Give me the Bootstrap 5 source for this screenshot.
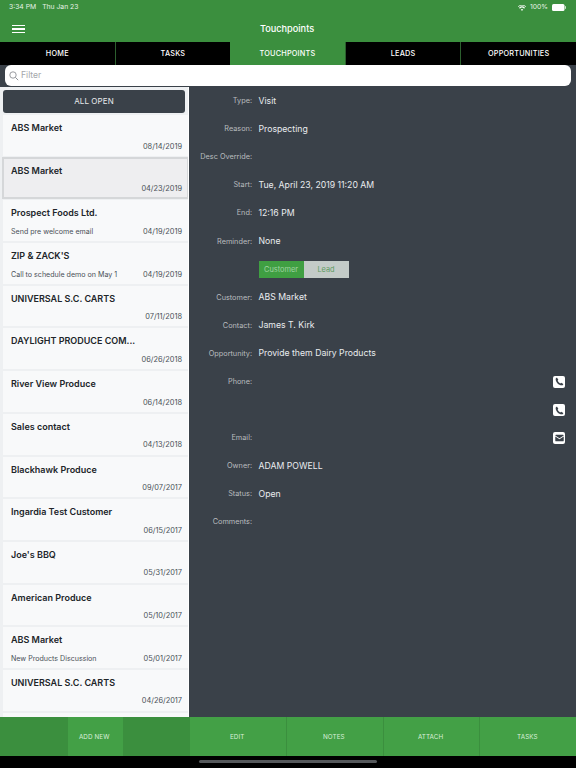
<!DOCTYPE html>
<html lang="en">
<head>
  <meta charset="UTF-8">
  <title>Touchpoints</title>
  <link href="https://cdn.jsdelivr.net/npm/bootstrap@5.3.3/dist/css/bootstrap.min.css" rel="stylesheet">
  <style>
    html, body { height: 768px; overflow: hidden; }
    body { background: #000; font-family: Inter, "Liberation Sans", sans-serif; color: #fff; }
    .app { width: 576px; height: 768px; }
    .top-head { height: 42px; background: #3b8f3e; padding: 0 10px 0 9px; }
    .status-row { height: 14px; font-size: 6.8px; color: #e6f2e6; padding-top: 1px; }
    .title-row { height: 28px; }
    .title-row span { font-size: 9.2px; font-weight: 500; flex: 1; text-align: center; padding-right: 17px; padding-top: 2px; }
    .burger { width: 13px; margin-left: 3px; padding-top: 2px; }
    .burger i { display: block; height: 1.4px; background: #fff; margin: 2.4px 0; }
    .tab-row { height: 23px; background: #000; }
    .tab-cell { flex: 1; font-size: 7.3px; font-weight: 500; letter-spacing: .2px; border-left: 1px solid #2c5f2e; padding-top: 1.5px; }
    .tab-cell:first-child { border-left: 0; }
    .tab-cell.on { background: #3b8f3e; border-left: 0; }
    .filter-wrap { height: 22px; background: #3a4149; padding: 0 5px 1px; }
    .filter-box { height: 21px; background: #fff; border-radius: 6px; color: #a4a7ab; font-size: 8.6px; padding-left: 4px; gap: 2px; }
    .main-row { height: 630px; }
    .left-col { width: 189px; background: #eef0f2; overflow: hidden; border-right: 1px solid #fff; }
    .all-open { height: 23px; margin: 2.500px 3px 2.500px; background: #3a4149; border-radius: 3px; font-size: 8px; color: #e8eaec; letter-spacing: .1px; }
    .tp-item { height: 40.7px; margin: 0 0 2px 3px; background: #f8f9fa; color: #212529; padding: 6px 6px 0 8px; }
    .tp-item.sel { background: #eeeef0; outline: 2px solid #d5d7d9; outline-offset: -1px; }
    .tp-name { font-size: 9px; font-weight: 600; line-height: 13px; height: 19.500px; white-space: nowrap; }
    .tp-sub { font-size: 7.1px; color: #495057; line-height: 12px; }
    .tp-date { font-size: 7.4px; }
    .right-col { flex: 1; background: #3a4149; }
    .det-row { height: 28.1px; }
    .det-label { width: 63px; text-align: right; font-size: 7.3px; color: #b9bcbf; padding-top: 1px; white-space: nowrap; }
    .det-val { margin-left: 6.5px; font-size: 8.7px; color: #e9ecef; }
    .seg-box { margin-left: 6.5px; height: 17px; font-size: 7.4px; width: 90px; }
    .seg-box div { flex: 1; }
    .seg-a { background: #3f9f42; color: #9fd3a1; }
    .seg-b { background: #c3cbc8; color: #5f9b63; }
    .act-icon { width: 12px; height: 12px; background: #fff; border-radius: 2px; margin-left: auto; margin-right: 11px; }
    .bottom-bar { height: 39px; background: #3b8f3e; }
    .bot-cell { font-size: 6.3px; color: #d9efd9; letter-spacing: .1px; background: #43a046; border-left: 1px solid #3b8f3e; padding-top: 3px; padding-right: 1.5px; }
    .home-wrap { height: 12px; }
    .home-line { width: 178px; height: 3px; background: #55585b; border-radius: 2px; margin-top: -1px; }
  </style>
</head>
<body>
<div class="app d-flex flex-column">

  <div class="top-head">
    <div class="status-row d-flex justify-content-between align-items-center">
      <div class="d-flex" style="gap:6px"><span>3:34 PM</span><span>Thu Jan 23</span></div>
      <div class="d-flex align-items-center gap-1">
        <svg width="8" height="6" viewBox="0 0 16 12"><path fill="#fff" d="M8 12 5.6 9.2a3.4 3.4 0 0 1 4.8 0zM3.8 7.3l-1.7-2a8.6 8.6 0 0 1 11.8 0l-1.7 2a6 6 0 0 0-8.4 0zM.9 3.9 0 2.8a11.7 11.7 0 0 1 16 0l-.9 1.1a10.300 10.300 0 0 0-14.200 0z"/></svg>
        <span>100%</span>
        <svg width="14" height="7" viewBox="0 0 14 7"><rect width="12.500" height="7" rx="1.500" fill="#fff"/><rect x="13" y="2.200" width="1" height="2.600" fill="#cfe5cf"/></svg>
      </div>
    </div>
    <div class="title-row d-flex align-items-center">
      <div class="burger"><i></i><i></i><i></i></div>
      <span>Touchpoints</span>
    </div>
  </div>

  <div class="tab-row d-flex">
    <div class="tab-cell d-flex align-items-center justify-content-center">HOME</div>
    <div class="tab-cell d-flex align-items-center justify-content-center">TASKS</div>
    <div class="tab-cell on d-flex align-items-center justify-content-center">TOUCHPOINTS</div>
    <div class="tab-cell d-flex align-items-center justify-content-center">LEADS</div>
    <div class="tab-cell d-flex align-items-center justify-content-center">OPPORTUNITIES</div>
  </div>

  <div class="filter-wrap">
    <div class="filter-box d-flex align-items-center">
      <svg width="10" height="10" viewBox="0 0 10 10"><circle cx="4" cy="4" r="3.200" fill="none" stroke="#8e9196" stroke-width=".9"/><path d="M6.400 6.400 9.200 9.200" stroke="#8e9196" stroke-width="1"/></svg>
      <span>Filter</span>
    </div>
  </div>

  <div class="main-row d-flex">
    <div class="left-col">
      <div class="all-open d-flex align-items-center justify-content-center">ALL OPEN</div>
      <div id="tpList"></div>
    </div>

    <div class="right-col">
      <div class="det-row d-flex align-items-center"><div class="det-label">Type:</div><div class="det-val">Visit</div></div>
      <div class="det-row d-flex align-items-center"><div class="det-label">Reason:</div><div class="det-val">Prospecting</div></div>
      <div class="det-row d-flex align-items-center"><div class="det-label">Desc Override:</div></div>
      <div class="det-row d-flex align-items-center"><div class="det-label">Start:</div><div class="det-val">Tue, April 23, 2019 11:20 AM</div></div>
      <div class="det-row d-flex align-items-center"><div class="det-label">End:</div><div class="det-val">12:16 PM</div></div>
      <div class="det-row d-flex align-items-center"><div class="det-label">Reminder:</div><div class="det-val">None</div></div>
      <div class="det-row d-flex align-items-center">
        <div class="det-label"></div>
        <div class="seg-box d-flex">
          <div class="seg-a d-flex align-items-center justify-content-center">Customer</div>
          <div class="seg-b d-flex align-items-center justify-content-center">Lead</div>
        </div>
      </div>
      <div class="det-row d-flex align-items-center"><div class="det-label">Customer:</div><div class="det-val">ABS Market</div></div>
      <div class="det-row d-flex align-items-center"><div class="det-label">Contact:</div><div class="det-val">James T. Kirk</div></div>
      <div class="det-row d-flex align-items-center"><div class="det-label">Opportunity:</div><div class="det-val">Provide them Dairy Products</div></div>
      <div class="det-row d-flex align-items-center">
        <div class="det-label">Phone:</div>
        <div class="act-icon d-flex align-items-center justify-content-center">
          <svg width="9" height="9" viewBox="0 0 10 10"><path fill="#3a4149" d="M2.300.8 3.700 3.100 2.900 4.200C3.500 5.500 4.500 6.500 5.800 7.100L6.900 6.300 9.200 7.700C9.200 8.700 8.500 9.400 7.500 9.300 3.900 8.900 1.100 6.100.7 2.500.6 1.500 1.300.8 2.300.8Z"/></svg>
        </div>
      </div>
      <div class="det-row d-flex align-items-center">
        <div class="act-icon d-flex align-items-center justify-content-center">
          <svg width="9" height="9" viewBox="0 0 10 10"><path fill="#3a4149" d="M2.300.8 3.700 3.100 2.900 4.200C3.500 5.500 4.500 6.500 5.800 7.100L6.900 6.300 9.200 7.700C9.200 8.700 8.500 9.400 7.500 9.300 3.900 8.900 1.100 6.100.7 2.500.6 1.500 1.300.8 2.300.8Z"/></svg>
        </div>
      </div>
      <div class="det-row d-flex align-items-center">
        <div class="det-label">Email:</div>
        <div class="act-icon d-flex align-items-center justify-content-center">
          <svg width="9" height="8" viewBox="0 0 10 8"><path fill="#3a4149" d="M.3 1.200C.3.600.7.300 1.200.3h7.600c.5 0 .9.300.9.900L5 4.200zM.3 2.400 5 5.400l4.700-3v4.300c0 .6-.4 1-.9 1H1.200c-.5 0-.9-.4-.9-1z"/></svg>
        </div>
      </div>
      <div class="det-row d-flex align-items-center"><div class="det-label">Owner:</div><div class="det-val">ADAM POWELL</div></div>
      <div class="det-row d-flex align-items-center"><div class="det-label">Status:</div><div class="det-val">Open</div></div>
      <div class="det-row d-flex align-items-center"><div class="det-label">Comments:</div></div>
    </div>
  </div>

  <div class="bottom-bar d-flex">
    <div class="d-flex" style="width:189px">
      <div class="flex-fill"></div>
      <div class="bot-cell d-flex align-items-center justify-content-center" style="width:56px">ADD NEW</div>
      <div class="flex-fill"></div>
    </div>
    <div class="flex-fill d-flex">
      <div class="bot-cell flex-fill w-25 d-flex align-items-center justify-content-center">EDIT</div>
      <div class="bot-cell flex-fill w-25 d-flex align-items-center justify-content-center">NOTES</div>
      <div class="bot-cell flex-fill w-25 d-flex align-items-center justify-content-center">ATTACH</div>
      <div class="bot-cell flex-fill w-25 d-flex align-items-center justify-content-center">TASKS</div>
    </div>
  </div>
  <div class="home-wrap d-flex justify-content-center align-items-center"><div class="home-line"></div></div>
</div>

<script src="https://cdn.jsdelivr.net/npm/bootstrap@5.3.3/dist/js/bootstrap.bundle.min.js"></script>
<script>
  const items = [
    ['ABS Market', '', '08/14/2019'],
    ['ABS Market', '', '04/23/2019', 1],
    ['Prospect Foods Ltd.', 'Send pre welcome email', '04/19/2019'],
    ["ZIP & ZACK'S", 'Call to schedule demo on May 1', '04/19/2019'],
    ['UNIVERSAL S.C. CARTS', '', '07/11/2018'],
    ['DAYLIGHT PRODUCE COM...', '', '06/26/2018'],
    ['River View Produce', '', '06/14/2018'],
    ['Sales contact', '', '04/13/2018'],
    ['Blackhawk Produce', '', '09/07/2017'],
    ['Ingardia Test Customer', '', '06/15/2017'],
    ["Joe's BBQ", '', '05/31/2017'],
    ['American Produce', '', '05/10/2017'],
    ['ABS Market', 'New Products Discussion', '05/01/2017'],
    ['UNIVERSAL S.C. CARTS', '', '04/26/2017'],
    ['', '', '']
  ];
  const list = document.getElementById('tpList');
  items.forEach(i => {
    list.innerHTML += `<div class="tp-item ${i[3] ? 'sel' : ''}">
      <div class="tp-name">${i[0].replace('&', '&amp;')}</div>
      <div class="tp-sub d-flex justify-content-between"><span>${i[1]}</span><span class="tp-date">${i[2]}</span></div>
    </div>`;
  });
</script>
</body>
</html>
